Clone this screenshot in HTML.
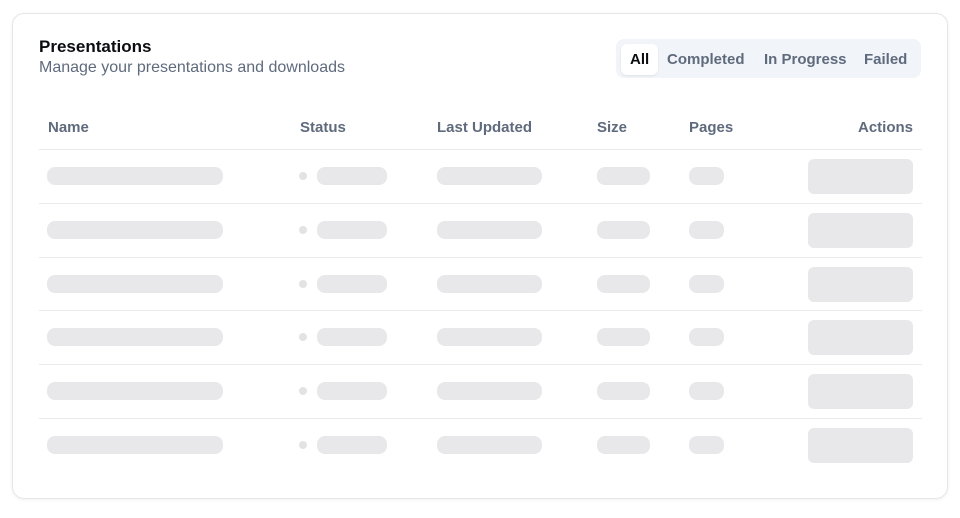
<!DOCTYPE html><html><head><style>
body{margin:0;background:#fff;font-family:"Liberation Sans",sans-serif;}
.card{position:absolute;left:12px;top:13px;width:936px;height:486px;border:1px solid #e4e6ea;border-radius:12px;box-shadow:0 1px 3px rgba(0,0,0,.06);box-sizing:border-box;}
.a{position:absolute;}
.t{font-size:17px;font-weight:bold;color:#0b0d12;left:39px;top:37px;}
.s{font-size:16px;color:#5f6b7d;left:39px;top:59px;}
.tabs{left:616px;top:39px;width:305px;height:39px;background:#f1f4f8;border-radius:8px;}
.tab{position:absolute;top:51px;font-size:15px;color:#5f6b7d;font-weight:bold;}
.h{position:absolute;top:119px;font-size:15px;color:#5f6b7d;font-weight:bold;}
.line{position:absolute;left:39px;width:883px;height:1px;background:#e8eaed;}
.b{position:absolute;background:#e8e8ea;border-radius:8px;height:18px;}
.d{position:absolute;width:8px;height:8px;border-radius:50%;background:#e3e3e5;}
</style></head><body>
<div class="card"></div>
<div class="a t">Presentations</div>
<div class="a s">Manage your presentations and downloads</div>
<div class="a tabs"></div>
<div class="a" style="left:621px;top:44px;width:37px;height:31px;background:#fff;border-radius:6px;box-shadow:0 1px 2px rgba(0,0,0,.08)"></div>
<div class="tab" style="left:630px;color:#0b0d12">All</div>
<div class="tab" style="left:667px">Completed</div>
<div class="tab" style="left:764px">In Progress</div>
<div class="tab" style="left:864px">Failed</div>
<div class="h" style="left:48px">Name</div>
<div class="h" style="left:300px">Status</div>
<div class="h" style="left:437px">Last Updated</div>
<div class="h" style="left:597px">Size</div>
<div class="h" style="left:689px">Pages</div>
<div class="h" style="left:858px">Actions</div>
<div id="rows"></div>
<script>
var r='';for(var i=0;i<6;i++){var y=149+i*53.8;
r+='<div class="line" style="top:'+y+'px"></div>';
var c=y+27;
r+='<div class="b" style="left:47px;width:176px;top:'+(c-9)+'px"></div>';
r+='<div class="d" style="left:299px;top:'+(c-4)+'px"></div>';
r+='<div class="b" style="left:317px;width:70px;top:'+(c-9)+'px"></div>';
r+='<div class="b" style="left:437px;width:105px;top:'+(c-9)+'px"></div>';
r+='<div class="b" style="left:597px;width:53px;top:'+(c-9)+'px"></div>';
r+='<div class="b" style="left:689px;width:35px;top:'+(c-9)+'px"></div>';
r+='<div class="b" style="left:808px;width:105px;height:35px;border-radius:6px;top:'+(c-17)+'px"></div>';}
document.getElementById('rows').innerHTML=r;
</script>
</body></html>
